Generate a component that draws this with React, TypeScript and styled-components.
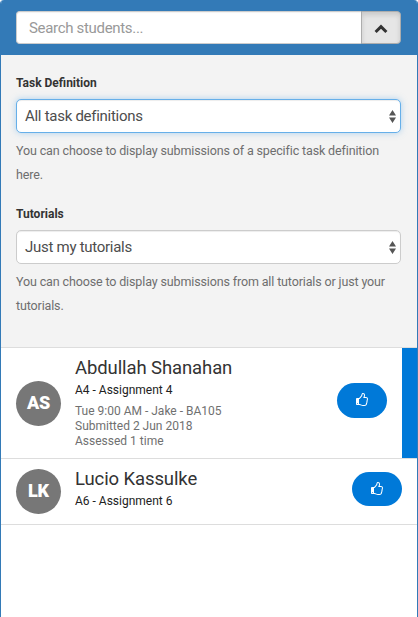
import React from "react";
import styled, { createGlobalStyle } from "styled-components";

const GlobalStyle = createGlobalStyle`
  *, *::before, *::after { box-sizing: border-box; }
  body {
    margin: 0;
    background: #fff;
    color: #333;
    font-family: Roboto, "Liberation Sans", sans-serif;
  }
`;

const Panel = styled.main`
  height: 617px;
  overflow: hidden;
  background: #fff;
  border: 1px solid #337ab7;
  border-width: 0 1px;
  border-radius: 4px 4px 0 0;
`;

const SearchBar = styled.header`
  display: flex;
  height: 55px;
  padding: 11px 16px 11px 15px;
  background: #337ab7;
`;

const SearchInput = styled.input`
  flex: 1;
  min-width: 0;
  height: 33px;
  padding: 0 12px;
  border: 1px solid #ccc;
  border-right: 0;
  border-radius: 4px 0 0 4px;
  background: #fff;
  box-shadow: inset 0 1px 1px rgba(0, 0, 0, 0.05);
  font: 400 15px Roboto, sans-serif;
  letter-spacing: -0.32px;
  outline: none;
  &::placeholder { color: #999; opacity: 1; }
`;

const ToggleButton = styled.button`
  display: flex;
  align-items: center;
  justify-content: center;
  width: 40px;
  height: 33px;
  padding: 2px 0 0;
  border: 1px solid #adadad;
  border-radius: 0 4px 4px 0;
  background: #e6e6e6;
  box-shadow: inset 0 3px 5px rgba(0, 0, 0, 0.125);
  color: #333;
`;

const Filters = styled.section`
  height: 293px;
  padding: 16px 16px 0 15px;
  background: #f3f3f3;
  border-bottom: 1px solid #ddd;
`;

const Field = styled.div`
  height: 131px;
`;

const Label = styled.label`
  display: block;
  height: 28px;
  line-height: 24px;
  font-size: 12px;
  font-weight: 700;
`;

const SelectBox = styled.div<{ $focused?: boolean }>`
  display: flex;
  align-items: center;
  justify-content: space-between;
  height: 34px;
  padding: 0 4px 0 8px;
  border: 1px solid ${(p) => (p.$focused ? "#66afe9" : "#ccc")};
  border-radius: 5px;
  background: #fff;
  box-shadow: inset 0 1px 1px rgba(0, 0, 0, 0.075)
    ${(p) => (p.$focused ? ", 0 0 6px rgba(102, 175, 233, 0.5)" : "")};
  color: #4d4d4d;
  font-size: 15px;
  letter-spacing: -0.28px;
`;

const Help = styled.p`
  margin: 6px 0 0;
  color: #6e6e6e;
  font-size: 12.5px;
  line-height: 24px;
  letter-spacing: -0.135px;
`;

const Row = styled.article<{ $height: number; $selected?: boolean }>`
  display: flex;
  align-items: center;
  height: ${(p) => p.$height}px;
  padding-left: 15px;
  padding-right: ${(p) => (p.$selected ? 0 : 15)}px;
  border-bottom: 1px solid #ddd;
`;

const Avatar = styled.div`
  display: flex;
  flex: none;
  align-items: center;
  justify-content: center;
  width: 45px;
  height: 45px;
  padding-bottom: 2px;
  border-radius: 50%;
  background: #777;
  color: #fff;
  font-size: 18px;
  font-weight: 900;
  letter-spacing: -0.2px;
`;

const Details = styled.div`
  flex: 1;
  align-self: flex-start;
  padding: 8px 0 0 14px;
`;

const Name = styled.h4`
  margin: 0;
  height: 24px;
  font-size: 18.5px;
  font-weight: 400;
  line-height: 24px;
  letter-spacing: -0.1px;
`;

const Assignment = styled.div`
  height: 20px;
  color: #222;
  font-size: 12px;
  line-height: 20px;
`;

const Meta = styled.div`
  margin-top: 4px;
  color: #707070;
  font-size: 12px;
  line-height: 15px;
`;

const LikeButton = styled.button<{ $height: number }>`
  display: flex;
  align-items: center;
  justify-content: center;
  width: 50px;
  height: ${(p) => p.$height}px;
  margin-bottom: 6px;
  padding: 0;
  border: 0;
  border-radius: 18px;
  background: #0079d8;
  color: #fff;
`;

const SelectedBar = styled.div`
  align-self: stretch;
  width: 15px;
  margin-left: 15px;
  background: #0079d8;
`;

const ChevronUp = () => (
  <svg width="14" height="10" viewBox="0 0 14 10" aria-hidden="true">
    <path d="M1.6 8 7 2.6 12.4 8" fill="none" stroke="currentColor" strokeWidth="3" />
  </svg>
);

const Arrows = () => (
  <svg width="7" height="13" viewBox="0 0 7 13" fill="#555" aria-hidden="true">
    <path d="M3.5 0 7 5.4H0zM3.5 13 0 7.6h7z" />
  </svg>
);

const ThumbsUp = () => (
  <svg width="13" height="14" viewBox="0 0 1664 1792" fill="currentColor" aria-hidden="true">
    <path d="M256 1344q0-26-19-45t-45-19-45 19-19 45 19 45 45 19 45-19 19-45zm1152-576q0-51-39-89.5t-89-38.5h-352q0-58 48-159.500t48-160.500q0-98-32-145t-128-47q-26 26-38 85t-30.500 125.500-59.500 109.500q-22 23-77 91-4 5-23 30t-31.500 41-34.500 42.500-40 44-38.500 35.500-40 27-35.500 9h-32v640h32q13 0 31.500 3t33 6.500 38 11 35 11.500 35.500 12.500 29 10.500q211 73 342 73h121q192 0 192-167 0-26-5-56 30-16 47.500-52.500t17.500-73.500-18-69q53-50 53-119 0-25-10-55.500t-25-47.500q32-1 53.500-47t21.500-81zm128-1q0 89-49 163 9 33 9 69 0 77-38 144 3 21 3 43 0 101-60 178 1 139-85 219.500t-227 80.500h-129q-96 0-189.500-22.500t-216.500-65.500q-116-40-138-40h-288q-53 0-90.500-37.500t-37.500-90.500v-640q0-53 37.500-90.500t90.500-37.500h274q36-24 137-155 58-75 107-128 24-25 35.500-85.500t30.500-126.500 62-108q39-37 90-37 84 0 151 32.500t102 101.500 35 186q0 93-48 192h176q104 0 180 76t76 179z" />
  </svg>
);

interface Student {
  initials: string;
  name: string;
  assignment: string;
  meta?: string[];
  height: number;
  buttonHeight: number;
  selected?: boolean;
}

const students: Student[] = [
  {
    initials: "AS",
    name: "Abdullah Shanahan",
    assignment: "A4 - Assignment 4",
    meta: ["Tue 9:00 AM - Jake - BA105", "Submitted 2 Jun 2018", "Assessed 1 time"],
    height: 111,
    buttonHeight: 35,
    selected: true,
  },
  {
    initials: "LK",
    name: "Lucio Kassulke",
    assignment: "A6 - Assignment 6",
    height: 66,
    buttonHeight: 34,
  },
];

export default function App() {
  return (
    <>
      <GlobalStyle />
      <Panel>
        <SearchBar>
          <SearchInput placeholder="Search students..." />
          <ToggleButton aria-label="Hide filters">
            <ChevronUp />
          </ToggleButton>
        </SearchBar>
        <Filters>
          <Field>
            <Label>Task Definition</Label>
            <SelectBox $focused>
              All task definitions
              <Arrows />
            </SelectBox>
            <Help>You can choose to display submissions of a specific task definition here.</Help>
          </Field>
          <Field>
            <Label>Tutorials</Label>
            <SelectBox>
              Just my tutorials
              <Arrows />
            </SelectBox>
            <Help>You can choose to display submissions from all tutorials or just your tutorials.</Help>
          </Field>
        </Filters>
        {students.map((s) => (
          <Row key={s.name} $height={s.height} $selected={s.selected}>
            <Avatar>{s.initials}</Avatar>
            <Details>
              <Name>{s.name}</Name>
              <Assignment>{s.assignment}</Assignment>
              {s.meta && (
                <Meta>
                  {s.meta.map((line) => (
                    <div key={line}>{line}</div>
                  ))}
                </Meta>
              )}
            </Details>
            <LikeButton $height={s.buttonHeight} aria-label="Like">
              <ThumbsUp />
            </LikeButton>
            {s.selected && <SelectedBar />}
          </Row>
        ))}
      </Panel>
    </>
  );
}
